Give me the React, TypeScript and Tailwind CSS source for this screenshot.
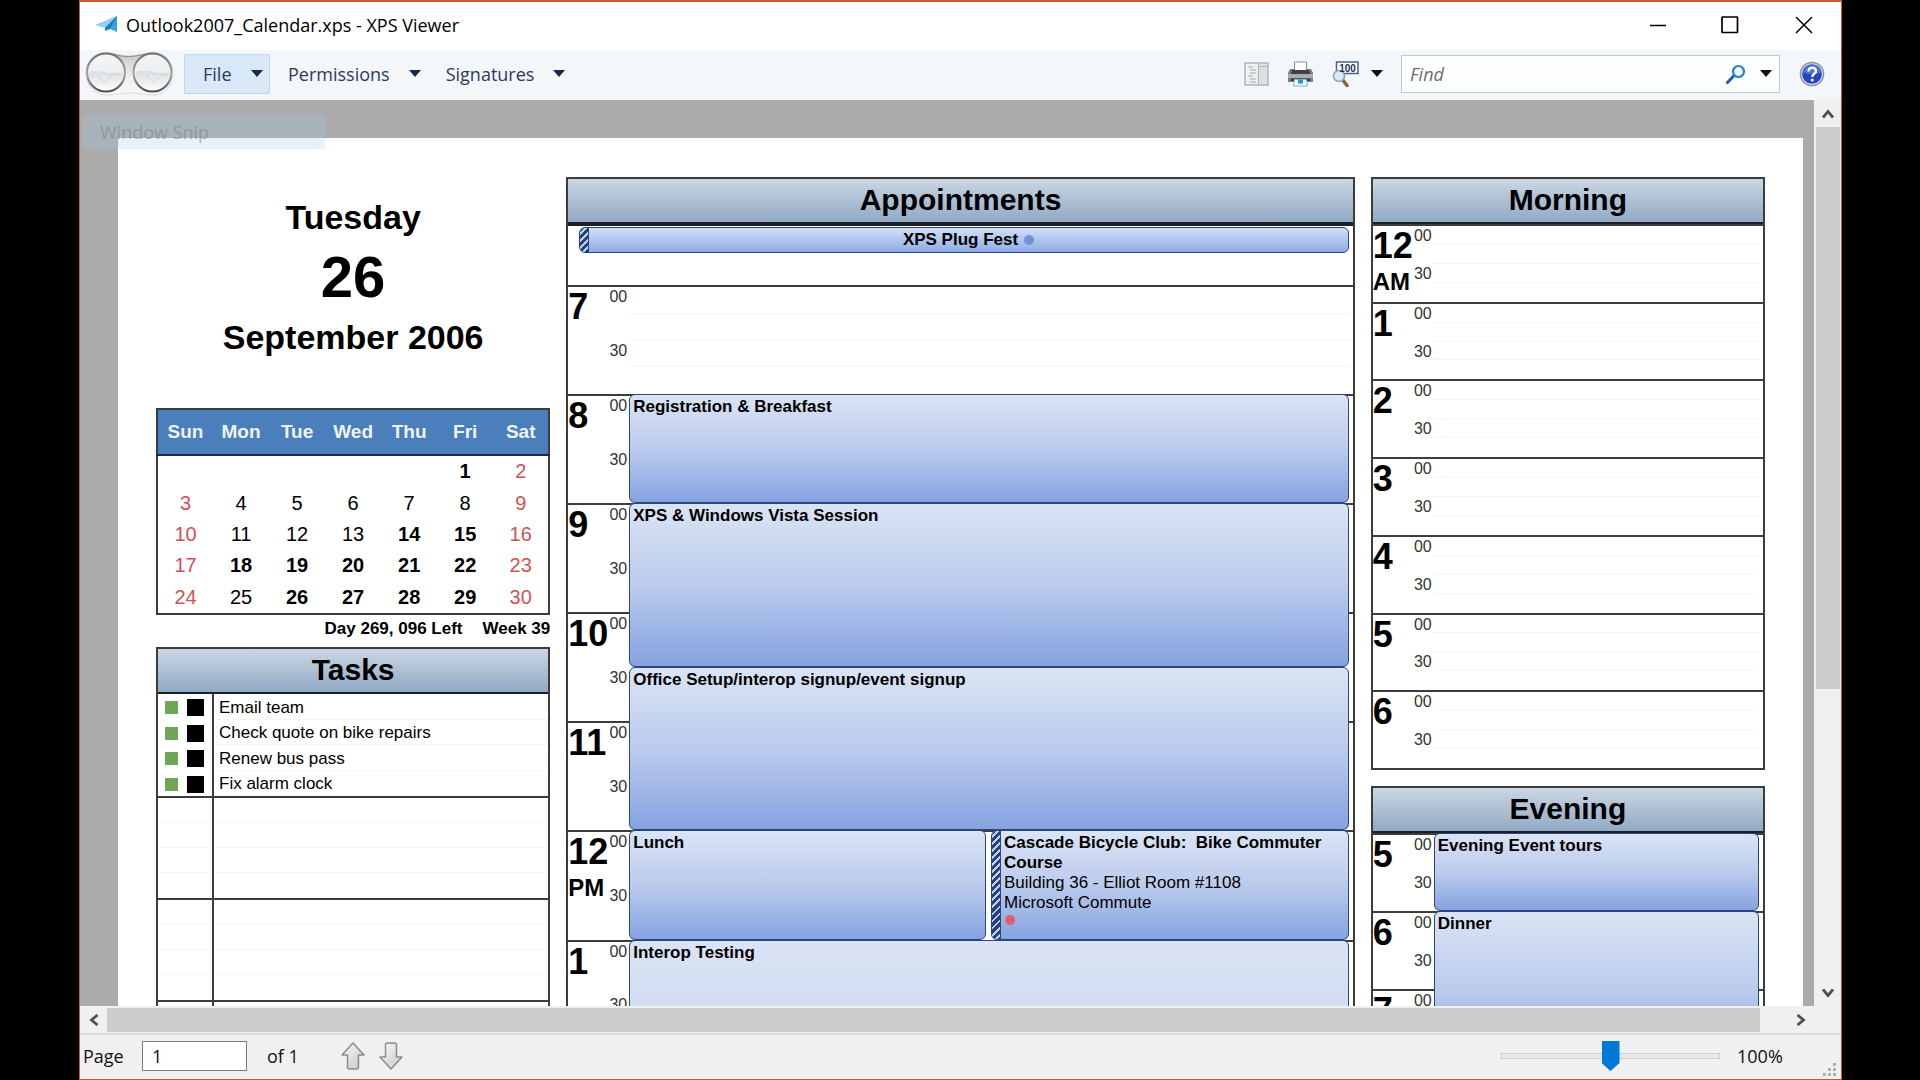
import React from 'react';
import { twMerge } from 'tailwind-merge';

type CalendarEvent = {
  title: string;
  // 1-based half hour slot, and how many slots the event lasts
  start: number;
  slots: number;
  lane?: 'left' | 'right';
  details?: string[];
  outOfOffice?: boolean;
};

type Hour = {
  label: string;
  period?: string;
};

const WEEKDAYS = ['Sun', 'Mon', 'Tue', 'Wed', 'Thu', 'Fri', 'Sat'];

const WEEKS: (number | null)[][] = [
  [null, null, null, null, null, 1, 2],
  [3, 4, 5, 6, 7, 8, 9],
  [10, 11, 12, 13, 14, 15, 16],
  [17, 18, 19, 20, 21, 22, 23],
  [24, 25, 26, 27, 28, 29, 30],
];

const BUSY_DAYS = [1, 14, 15, 18, 19, 20, 21, 22, 26, 27, 28, 29];

const TASKS = [
  'Email team',
  'Check quote on bike repairs',
  'Renew bus pass',
  'Fix alarm clock',
];

const DAY_HOURS: Hour[] = [
  { label: '7' },
  { label: '8' },
  { label: '9' },
  { label: '10' },
  { label: '11' },
  { label: '12', period: 'PM' },
  { label: '1' },
];

const MORNING_HOURS: Hour[] = [
  { label: '12', period: 'AM' },
  { label: '1' },
  { label: '2' },
  { label: '3' },
  { label: '4' },
  { label: '5' },
  { label: '6' },
];

const EVENING_HOURS: Hour[] = [{ label: '5' }, { label: '6' }, { label: '7' }];

const DAY_EVENTS: CalendarEvent[] = [
  { title: 'Registration & Breakfast', start: 3, slots: 2 },
  { title: 'XPS & Windows Vista Session', start: 5, slots: 3 },
  { title: 'Office Setup/interop signup/event signup', start: 8, slots: 3 },
  { title: 'Lunch', start: 11, slots: 2, lane: 'left' },
  {
    title: 'Cascade Bicycle Club:  Bike Commuter Course',
    start: 11,
    slots: 2,
    lane: 'right',
    details: ['Building 36 - Elliot Room #1108', 'Microsoft Commute'],
    outOfOffice: true,
  },
  { title: 'Interop Testing', start: 13, slots: 8 },
];

const EVENING_EVENTS: CalendarEvent[] = [
  { title: 'Evening Event tours', start: 1, slots: 2 },
  { title: 'Dinner', start: 3, slots: 4 },
];

const Caret: React.FC<{ className?: string }> = ({ className }) => (
  <svg
    viewBox="0 0 12 7"
    className={twMerge('h-[7px] w-3 shrink-0 fill-[#14284a]', className)}>
    <path d="M0 0h12L6 7z" />
  </svg>
);

const Chevron: React.FC<{ path: string }> = ({ path }) => (
  <svg
    viewBox="0 0 12 12"
    className="h-3 w-3 fill-none stroke-[#505050]"
    strokeWidth="2.8">
    <path d={path} />
  </svg>
);

const AppIcon: React.FC = () => (
  <svg viewBox="0 0 22 17" className="h-[17px] w-[22px]">
    <path d="M0 9 21 0v16l-7-3z" fill="#35a3dc" />
    <path d="M0 9 21 0 9 12z" fill="#8fd3f0" />
    <path d="M9 12 21 0l-7 13-5 2z" fill="#1b7fbd" />
  </svg>
);

const Binoculars: React.FC = () => (
  <svg viewBox="0 0 90 46" className="h-[46px] w-[90px] shrink-0">
    <defs>
      <linearGradient id="frame" x1="0" y1="0" x2="0" y2="1">
        <stop offset="0" stopColor="#c4c4c4" />
        <stop offset="0.5" stopColor="#ececec" />
        <stop offset="1" stopColor="#fafafa" />
      </linearGradient>
      <linearGradient id="lens" x1="0" y1="0" x2="0" y2="1">
        <stop offset="0" stopColor="#f4f5f6" />
        <stop offset="0.48" stopColor="#eceef0" />
        <stop offset="0.54" stopColor="#dfe2e4" />
        <stop offset="1" stopColor="#fdfdfd" />
      </linearGradient>
      <linearGradient id="ring" x1="0" y1="0" x2="0" y2="1">
        <stop offset="0" stopColor="#6e6e6e" />
        <stop offset="0.55" stopColor="#a5a5a5" />
        <stop offset="1" stopColor="#4c4c4c" />
      </linearGradient>
    </defs>
    <path
      d="M21 1.500C30 2 36 5 44 5s15-3 24-3.500c12 0 20 9 20 21 0 12-8 21-19 21.500-9 0-16-2-25-2s-15 2-24 2C9 43 1 34 1 22S9 2 21 1.500z"
      fill="url(#frame)"
      stroke="#d9d9d9"
    />
    <path d="M28 3c6 2 10 2.500 16 2.500S55 4 61 3" fill="none" stroke="#8b8b8b" />
    <circle cx="21" cy="21.500" r="19" fill="url(#lens)" stroke="url(#ring)" strokeWidth="2" />
    <circle cx="67.500" cy="21.500" r="19" fill="url(#lens)" stroke="url(#ring)" strokeWidth="2" />
    <path
      d="M6 21h10c3 0 4 2 7 2h13M13 23c0 5 4 5 7 9 1-4 6-4 8-9M52 21h13c3 0 4 2 7 2h11M62 23c0 4 4 5 7 9 2-4 6-4 8-9"
      fill="none"
      stroke="#d2d5d7"
    />
  </svg>
);

const OutlineIcon: React.FC = () => (
  <svg viewBox="0 0 25 24" className="h-6 w-[25px]">
    <path d="M1 1h23v22H1z" fill="#eef0f0" stroke="#b1b5b5" strokeWidth="1.500" />
    <path d="M15 2h8v20h-8z" fill="#dde0e0" />
    <path d="M14.500 1v22M15 4.500h8" fill="none" stroke="#b1b5b5" />
    <path
      d="M4 5h5M6 8h6M6 11h6M4 14h5M6 17h6M6 20h6"
      stroke="#a7aaaa"
      strokeWidth="1.200"
    />
  </svg>
);

const PrinterIcon: React.FC = () => (
  <svg viewBox="0 0 27 26" className="h-[26px] w-[27px]">
    <path d="M7.500 1h12v9h-12z" fill="#fff" stroke="#8d8d8d" />
    <path d="M3 8h4v3h13V8h4l2 4v9H1v-9z" fill="#777b7e" />
    <path d="M5 9h17l1 4H4z" fill="#3d4144" />
    <path d="M1 13h25v4H1z" fill="#a8adb0" />
    <path d="M4 17.500h19V20H4z" fill="#35393c" />
    <path d="M7.500 18.500h12l1 6.500h-14z" fill="#eaf7fd" stroke="#7fb9d6" />
    <path d="M11 18.500h5v4h-5z" fill="#2c93cf" />
  </svg>
);

const ZoomIcon: React.FC = () => (
  <svg viewBox="0 0 27 26" className="h-[26px] w-[27px]">
    <path d="m10 18 5 6.500" stroke="#8a6136" strokeWidth="3.500" strokeLinecap="round" />
    <path d="M4.500 1H26v11.500H4.500z" fill="#fff" stroke="#4b5f8f" strokeWidth="1.500" />
    <circle cx="7" cy="15" r="5.500" fill="#d6ecfa" stroke="#8fa3b3" strokeWidth="1.500" />
    <text
      x="15.500"
      y="10.500"
      textAnchor="middle"
      className="fill-[#1e2f66] font-['Liberation_Sans',Arial,sans-serif] text-[10px] font-bold">
      100
    </text>
  </svg>
);

const SearchIcon: React.FC = () => (
  <svg viewBox="0 0 20 20" className="h-5 w-5 fill-none">
    <path d="m1.500 18.500 7-7.500" stroke="#1f5fb0" strokeWidth="3" strokeLinecap="round" />
    <circle cx="12.500" cy="7.500" r="5.500" fill="#eef7fd" stroke="#2f7fd0" strokeWidth="2.200" />
  </svg>
);

const HelpIcon: React.FC = () => (
  <svg viewBox="0 0 26 26" className="h-[26px] w-[26px]">
    <circle cx="13" cy="13" r="12.300" fill="#8d93a3" />
    <circle cx="13" cy="13" r="10.800" fill="#d3d8e6" />
    <circle cx="13" cy="13" r="9.800" fill="#2747b8" />
    <path d="M4 11a9.200 9.200 0 0 1 18 0c-4 3-14 3-18 0z" fill="#4c72d8" />
    <path
      d="M9.500 10.500c0-5 7.500-5 7.500-.5 0 3-3.700 2.600-3.700 6"
      fill="none"
      stroke="#fff"
      strokeWidth="2.400"
    />
    <circle cx="13.200" cy="19" r="1.500" fill="#fff" />
  </svg>
);

const PageArrow: React.FC<{ path: string }> = ({ path }) => (
  <svg viewBox="0 0 24 28" className="h-7 w-6">
    <defs>
      <linearGradient id="arrow" x1="0" y1="0" x2="1" y2="1">
        <stop offset="0" stopColor="#fafafa" />
        <stop offset="1" stopColor="#c6c6c6" />
      </linearGradient>
    </defs>
    <path
      d={path}
      fill="url(#arrow)"
      stroke="#8c8c8c"
      strokeWidth="1.500"
      strokeLinejoin="round"
    />
  </svg>
);

const TitleBar: React.FC = () => (
  <header className="flex h-12 shrink-0 items-center bg-white pb-[3px] pl-4">
    <AppIcon />
    <h1 className="ml-2 grow text-lg text-black">
      Outlook2007_Calendar.xps - XPS Viewer
    </h1>
    <div className="flex items-center gap-[2px] text-black">
      <button aria-label="Minimize" className="flex w-[70px] justify-center">
        <svg viewBox="0 0 18 18" className="h-[18px] w-[18px] fill-none stroke-current" strokeWidth="1.500">
          <path d="M1 9.500h16" />
        </svg>
      </button>
      <button aria-label="Maximize" className="flex w-[70px] justify-center">
        <svg viewBox="0 0 18 18" className="h-[18px] w-[18px] fill-none stroke-current" strokeWidth="1.700">
          <rect x="1" y="1" width="15.500" height="15.500" rx="0.500" />
        </svg>
      </button>
      <button aria-label="Close" className="flex w-[74px] justify-center">
        <svg viewBox="0 0 18 18" className="h-[18px] w-[18px] fill-none stroke-current" strokeWidth="1.500">
          <path d="m1 1 16 16M17 1 1 17" />
        </svg>
      </button>
    </div>
  </header>
);

const Toolbar: React.FC = () => (
  <div className="flex h-[50px] shrink-0 items-center bg-[#f3f7f9] pb-[3px] text-lg text-[#2c3a5e]">
    <div className="pl-[5px]">
      <Binoculars />
    </div>
    <nav className="ml-[9px] flex items-center">
      <button className="flex h-10 w-[86px] items-center justify-between border border-[#bdd8f0] bg-[#d8e8f7] pr-[6px] pl-[18px]">
        File
        <Caret />
      </button>
      <button className="ml-[18px] flex items-center gap-[19px]">
        Permissions
        <Caret />
      </button>
      <button className="ml-[25px] flex items-center gap-[19px]">
        Signatures
        <Caret />
      </button>
    </nav>
    <div className="ml-auto flex items-center">
      <button aria-label="Outline">
        <OutlineIcon />
      </button>
      <button aria-label="Print" className="ml-[18px]">
        <PrinterIcon />
      </button>
      <button aria-label="Zoom level" className="ml-[18px] flex items-center gap-3">
        <ZoomIcon />
        <Caret className="fill-[#111]" />
      </button>
    </div>
    <div className="ml-[18px] flex h-[38px] w-[379px] items-center border border-[#c3c9cb] bg-[#fdfefe] pr-[7px] pl-2">
      <input
        type="text"
        aria-label="Find"
        placeholder="Find"
        className="min-w-0 grow bg-transparent text-lg outline-none placeholder:text-[#6d6d6d] placeholder:italic"
      />
      <button aria-label="Search">
        <SearchIcon />
      </button>
      <button aria-label="Search options" className="ml-[14px]">
        <Caret className="fill-[#111]" />
      </button>
    </div>
    <button aria-label="Help" className="mr-4 ml-[19px]">
      <HelpIcon />
    </button>
  </div>
);

const PanelHeader: React.FC<{ title: string }> = ({ title }) => (
  <h2 className="h-[45px] border-b-2 border-[#1c1f24] bg-linear-to-b from-[#cbd7e3] to-[#91a9c5] text-center text-3xl leading-[42px] font-bold">
    {title}
  </h2>
);

const EventCard: React.FC<{ event: CalendarEvent }> = ({ event }) => (
  <div
    className={twMerge(
      'z-10 col-start-2 col-end-4 flex overflow-hidden rounded-md border border-[#2b457d] bg-linear-to-b from-[#dae4f4] via-[#bccbed] to-[#85a3e0]',
      event.lane === 'left' && 'col-end-3 mr-[3px]',
      event.lane === 'right' && 'col-start-3 ml-[2px]'
    )}
    style={{ gridRow: `${event.start} / span ${event.slots}` }}>
    {event.outOfOffice && <BusyStrip />}
    <div className="pt-[2px] pl-[3px] text-[17px] leading-5 whitespace-pre-wrap">
      <p className="font-bold">{event.title}</p>
      {event.details?.map((line) => (
        <p key={line}>{line}</p>
      ))}
      {event.outOfOffice && (
        <span className="mt-[2px] ml-px block h-[10px] w-[10px] rounded-full bg-[#e0606a]" />
      )}
    </div>
  </div>
);

const BusyStrip: React.FC = () => (
  <div className="w-[9px] shrink-0 border-r border-[#2b457d] bg-[repeating-linear-gradient(135deg,#26427c_0px,#26427c_3px,#c3d1ee_3px,#c3d1ee_5px)]" />
);

type ScheduleProps = {
  hours: Hour[];
  events?: CalendarEvent[];
  className: string;
};

// hours and events share one grid, two rows per hour
const Schedule: React.FC<ScheduleProps> = ({
  hours,
  events = [],
  className,
}) => (
  <div
    className={twMerge('grid grid-cols-[61px_1fr_1fr_4px]', className)}>
    {hours.map((hour, i) => (
      <div
        key={hour.label}
        className="col-span-full flex border-t-2 border-[#3c3c3c]"
        style={{ gridRow: `${i * 2 + 1} / span 2` }}>
        <div className="flex w-[61px] shrink-0 justify-between pr-[2px]">
          <div className="pt-[2px] font-bold">
            <p className="text-4xl leading-9">{hour.label}</p>
            {hour.period && (
              <p className="mt-[6px] text-2xl leading-6">{hour.period}</p>
            )}
          </div>
          <div className="grid grid-rows-2 text-base leading-5 text-[#333]">
            <span>00</span>
            <span>30</span>
          </div>
        </div>
        <div className="mr-1 grid grow grid-rows-4 divide-y divide-[#f5f5f0]">
          <div />
          <div />
          <div />
          <div />
        </div>
      </div>
    ))}
    {events.map((event) => (
      <EventCard key={event.title} event={event} />
    ))}
  </div>
);

const MonthTable: React.FC = () => (
  <table className="h-[207px] w-full table-fixed border-2 border-[#3c3c3c] text-center">
    <thead className="border-b-2 border-[#1c2a44] bg-[#4a7fbb] text-[19px] text-[#eef3fa]">
      <tr className="h-[46px]">
        {WEEKDAYS.map((day) => (
          <th key={day} className="p-0">
            {day}
          </th>
        ))}
      </tr>
    </thead>
    <tbody className="text-xl leading-[31px]">
      {WEEKS.map((week, i) => (
        <tr key={i}>
          {week.map((day, j) => (
            <td
              key={j}
              className={`p-0 ${j === 0 || j === 6 ? 'text-[#cf5355]' : 'text-black'} ${day && BUSY_DAYS.includes(day) ? 'font-bold' : ''}`}>
              {day}
            </td>
          ))}
        </tr>
      ))}
    </tbody>
  </table>
);

const TaskPanel: React.FC = () => (
  <section className="mt-2 border-2 border-b-0 border-[#3c3c3c]">
    <PanelHeader title="Tasks" />
    <ul className="grid h-[102px] grid-rows-4 text-[17px]">
      {TASKS.map((task, i) => (
        <li key={task} className="flex items-center">
          <span className="mt-[2px] ml-[7px] h-[13px] w-[13px] bg-[#6fa657]" />
          <input
            type="checkbox"
            id={`task-${i}`}
            className="mt-[2px] ml-[9px] h-[17px] w-[17px] appearance-none bg-black"
          />
          <span className="ml-2 self-stretch border-l-2 border-[#3c3c3c]" />
          <label
            htmlFor={`task-${i}`}
            className="flex grow items-center self-stretch border-b border-[#f5f5f0] pt-[2px] pl-[5px]">
            {task}
          </label>
        </li>
      ))}
    </ul>
    {[0, 1, 2].map((group) => (
      <div
        key={group}
        className="flex h-[102px] border-t-2 border-[#3c3c3c]">
        <div className="grid w-[56px] shrink-0 grid-rows-4 divide-y divide-[#f8f8f4] border-r-2 border-[#3c3c3c]">
          <div />
          <div />
          <div />
          <div />
        </div>
        <div className="mr-1 grid grow grid-rows-4 divide-y divide-[#f8f8f4]">
          <div />
          <div />
          <div />
          <div />
        </div>
      </div>
    ))}
  </section>
);

const DocumentPage: React.FC = () => (
  <article className="mt-[38px] mr-[11px] ml-[38px] grid grow grid-cols-[1fr_2fr_1fr] items-start gap-x-4 bg-white px-[38px] pt-[39px] font-['Liberation_Sans',Arial,sans-serif] text-black">
    <div>
      <div className="flex h-[231px] flex-col items-center pt-5 text-[34px] leading-10 font-bold">
        <p>Tuesday</p>
        <p className="text-[58px] leading-[80px]">26</p>
        <p>September 2006</p>
      </div>
      <MonthTable />
      <p className="mt-1 flex justify-end gap-5 text-[17px] leading-5 font-bold">
        <span>Day 269, 096 Left</span>
        <span>Week 39</span>
      </p>
      <TaskPanel />
    </div>

    <section className="border-2 border-b-0 border-[#3c3c3c]">
      <PanelHeader title="Appointments" />
      <div className="h-[61px] border-t-2 border-[#1c1f24] pt-px pr-1 pl-[11px]">
        <div className="flex h-[26px] overflow-hidden rounded-md border border-[#2b457d] bg-linear-to-b from-[#d3dff6] to-[#8fabe6]">
          <BusyStrip />
          <p className="flex grow items-center justify-center gap-[6px] text-[17px] leading-5 font-bold">
            XPS Plug Fest
            <span className="h-[10px] w-[10px] rounded-full bg-[#6f93dc]" />
          </p>
        </div>
      </div>
      <Schedule
        hours={DAY_HOURS}
        events={DAY_EVENTS}
        className="h-[1091px] grid-rows-[repeat(20,minmax(0,1fr))]"
      />
    </section>

    <div className="flex flex-col gap-4">
      <section className="border-2 border-[#3c3c3c]">
        <PanelHeader title="Morning" />
        <Schedule
          hours={MORNING_HOURS}
          className="h-[544px] grid-rows-[repeat(14,minmax(0,1fr))]"
        />
      </section>
      <section className="border-2 border-b-0 border-[#3c3c3c]">
        <PanelHeader title="Evening" />
        <Schedule
          hours={EVENING_HOURS}
          events={EVENING_EVENTS}
          className="h-[234px] grid-rows-[repeat(6,minmax(0,1fr))]"
        />
      </section>
    </div>
  </article>
);

const StatusBar: React.FC = () => (
  <footer className="flex h-[46px] shrink-0 items-center border-t-2 border-[#dcdcdc] bg-[#f0f0f0] pb-[2px] pl-[3px] text-lg text-[#111]">
    <label htmlFor="page" className="w-[59px]">
      Page
    </label>
    <input
      id="page"
      type="text"
      defaultValue="1"
      className="h-[30px] w-[105px] border border-[#7a7a7a] bg-white px-[9px] outline-none"
    />
    <span className="ml-5 w-[54px]">of 1</span>
    <button aria-label="Previous page" className="ml-5">
      <PageArrow path="M12 1 23 13h-5.500v12q0 2-2 2h-7q-2 0-2-2V13H1z" />
    </button>
    <button aria-label="Next page" className="ml-[14px]">
      <PageArrow path="M12 27 23 15h-5.500V3q0-2-2-2h-7q-2 0-2 2v12H1z" />
    </button>
    <input
      type="range"
      aria-label="Zoom"
      min={0}
      max={100}
      defaultValue={50}
      className="ml-auto h-8 w-[219px] appearance-none bg-transparent [&::-webkit-slider-runnable-track]:h-[6px] [&::-webkit-slider-runnable-track]:border [&::-webkit-slider-runnable-track]:border-[#cfd0d0] [&::-webkit-slider-runnable-track]:bg-[#e7eaea] [&::-webkit-slider-thumb]:mt-[-13px] [&::-webkit-slider-thumb]:h-[30px] [&::-webkit-slider-thumb]:w-[18px] [&::-webkit-slider-thumb]:appearance-none [&::-webkit-slider-thumb]:bg-[#0078d7] [&::-webkit-slider-thumb]:[clip-path:polygon(0_0,100%_0,100%_73%,50%_100%,0_73%)]"
    />
    <span className="ml-[17px] w-[85px]">100%</span>
    <svg viewBox="0 0 15 15" className="mr-1 h-[15px] w-[15px] shrink-0 self-end fill-[#b0b0b0]">
      <path d="M11 1h3v3h-3zM6 6h3v3H6zM11 6h3v3h-3zM1 11h3v3H1zM6 11h3v3H6zM11 11h3v3h-3z" />
    </svg>
  </footer>
);

const App: React.FC = () => {
  return (
    <div className="h-screen bg-black pr-[78px] pl-[79px] font-['Open_Sans','Segoe_UI',sans-serif]">
      <div className="flex h-full flex-col border border-t-2 border-[#cc5a31] bg-[#f0f0f0]">
        <TitleBar />
        <Toolbar />
        <div className="flex min-h-0 grow">
          <main className="relative flex min-w-0 grow items-start overflow-hidden bg-[#ababab]">
            <DocumentPage />
            <div className="absolute top-[15px] left-[2px] h-[34px] w-[243px] bg-[#a0c8e4]/25 pl-[18px] text-lg leading-[34px] text-[#7d868e]/60">
              Window Snip
            </div>
          </main>
          <div className="flex w-[27px] shrink-0 flex-col items-center">
            <button aria-label="Scroll up" className="flex h-[27px] items-center">
              <Chevron path="M1 9.500 6 3.500l5 6" />
            </button>
            <div className="w-6 grow">
              <div className="h-[66%] bg-[#cdcdcd]" />
            </div>
            <button aria-label="Scroll down" className="flex h-[27px] items-center">
              <Chevron path="M1 2.500 6 8.500l5-6" />
            </button>
          </div>
        </div>
        <div className="mt-[2px] mb-px flex h-6 shrink-0 items-center">
          <button aria-label="Scroll left" className="flex w-[27px] justify-center">
            <Chevron path="M9.500 1 3.500 6l6 5" />
          </button>
          <div className="mr-[27px] h-full grow bg-[#cdcdcd]" />
          <button aria-label="Scroll right" className="mr-[27px] flex w-[27px] justify-center">
            <Chevron path="M2.500 1 8.500 6l-6 5" />
          </button>
        </div>
        <StatusBar />
      </div>
    </div>
  );
};

export default App;
